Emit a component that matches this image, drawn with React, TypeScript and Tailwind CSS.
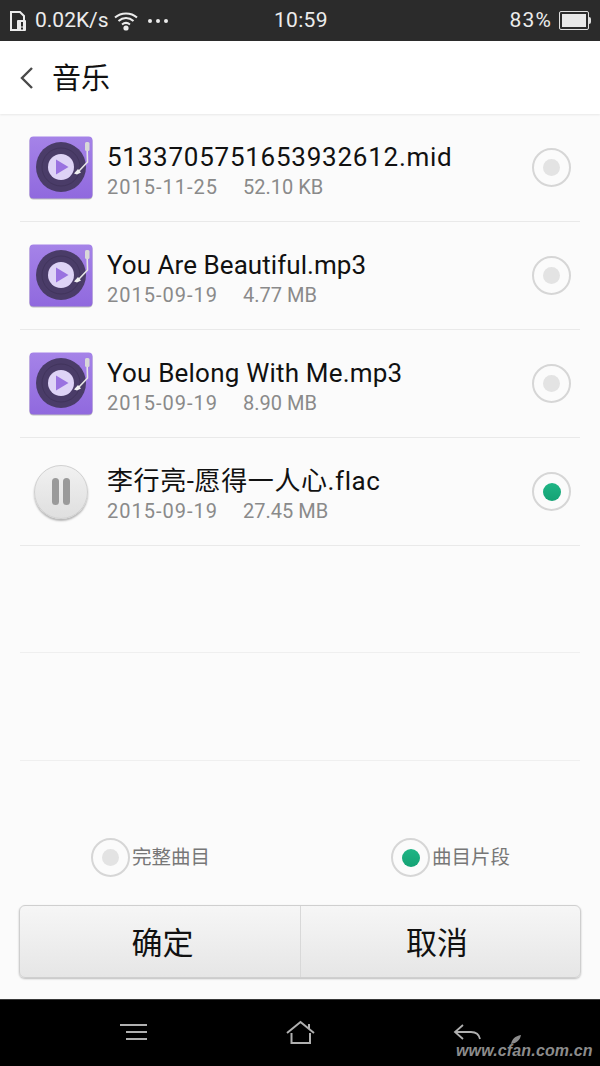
import React from 'react';

const FONT = "font-['Roboto','Noto_Sans_CJK_SC',sans-serif]";

const DiscIcon = () => (
  <svg width="64" height="64" viewBox="0 0 64 64">
    <defs>
      <linearGradient id="disc-bg" x1="0" y1="0" x2="0" y2="1">
        <stop offset="0" stopColor="#a583e8" />
        <stop offset="1" stopColor="#9069de" />
      </linearGradient>
    </defs>
    <rect x="0.5" y="1.5" width="63" height="62" rx="4" fill="#8a8a8a" opacity="0.55" />
    <rect x="0.5" y="0.5" width="63" height="62" rx="4" fill="url(#disc-bg)" />
    <circle cx="32" cy="31" r="25" fill="#4a3c68" />
    <circle cx="32" cy="31" r="19" fill="none" stroke="#41345c" strokeWidth="1" />
    <circle cx="32" cy="31" r="13" fill="#ded3f6" />
    <path d="M27 23.5 L39.5 31 L27 38.5 Z" fill="#9a72e0" />
    <path d="M58 7 L58.5 26 L50 35" fill="none" stroke="#e6e6e6" strokeWidth="1.6" />
    <rect x="56" y="6" width="4.5" height="9" rx="1.5" fill="#d8d8d8" />
    <path d="M49 33 L52 36.5 L48 38.5 L45 37.5 Z" fill="#f0f0f0" />
  </svg>
);

const Radio = ({ on }: { on: boolean }) => (
  <div className="flex h-[39px] w-[39px] shrink-0 items-center justify-center rounded-full border-2 border-[#d6d6d6] bg-[#fbfbfb]">
    {on ? (
      <div className="h-[18px] w-[18px] rounded-full bg-gradient-to-b from-[#1fb585] to-[#14a274]" />
    ) : (
      <div className="h-[17px] w-[17px] rounded-full bg-[#e3e3e3]" />
    )}
  </div>
);

const PauseButton = () => (
  <div className="ml-[5px] flex h-[54px] w-[54px] items-center justify-center gap-[4px] rounded-full border border-[#d0d0d0] bg-gradient-to-b from-[#f1f1f1] to-[#dfdfdf] shadow-[0_2px_2px_rgba(0,0,0,0.28)]">
    <div className="h-[27px] w-[7px] rounded-full bg-[#9a9a9a]" />
    <div className="h-[27px] w-[7px] rounded-full bg-[#9a9a9a]" />
  </div>
);

const songs = [
  { name: '5133705751653932612.mid', date: '2015-11-25', size: '52.10 KB', playing: false, track: 'tracking-[0.75px]' },
  { name: 'You Are Beautiful.mp3', date: '2015-09-19', size: '4.77 MB', playing: false, track: 'tracking-[0.05px]' },
  { name: 'You Belong With Me.mp3', date: '2015-09-19', size: '8.90 MB', playing: false, track: 'tracking-[0.2px]' },
  { name: '李行亮-愿得一人心.flac', date: '2015-09-19', size: '27.45 MB', playing: true, track: 'tracking-[0.6px]' },
];

export default function App() {
  return (
    <div className={`flex h-[1066px] w-[600px] flex-col overflow-hidden bg-[#fbfbfb] ${FONT}`}>
      {/* status bar */}
      <div className="relative flex h-[41px] shrink-0 items-center bg-[#2b2b2b] pl-[10px] pr-[9px] text-[21px] text-[#ececec]">
        <svg width="17" height="20" viewBox="0 0 17 20" className="mr-[8px]">
          <path d="M1 1h9l4 4v5h-3v9H1z" fill="none" stroke="#ececec" strokeWidth="2" />
          <rect x="7" y="9" width="9" height="11" rx="1" fill="#ececec" />
          <rect x="11" y="11" width="2" height="4.5" fill="#2b2b2b" />
          <rect x="11" y="16.5" width="2" height="2" fill="#2b2b2b" />
        </svg>
        <span>0.02K/s</span>
        <svg width="24" height="20" viewBox="0 0 24 20" className="ml-[5px]">
          <path d="M1 6.5C7 1 17 1 23 6.5" fill="none" stroke="#ececec" strokeWidth="2" />
          <path d="M4.5 10C9 6 15 6 19.5 10" fill="none" stroke="#ececec" strokeWidth="2" />
          <path d="M8 13.5C10.5 11.5 13.5 11.5 16 13.5" fill="none" stroke="#ececec" strokeWidth="2" />
          <circle cx="12" cy="17" r="2.6" fill="#ececec" />
        </svg>
        <div className="ml-[10px] flex gap-[4px]">
          <div className="h-[4px] w-[4px] rounded-full bg-[#ececec]" />
          <div className="h-[4px] w-[4px] rounded-full bg-[#ececec]" />
          <div className="h-[4px] w-[4px] rounded-full bg-[#ececec]" />
        </div>
        <span className="absolute left-[274px] tracking-[0.3px]">10:59</span>
        <span className="ml-auto tracking-[1.2px]">83%</span>
        <div className="ml-[7px] flex items-center">
          <div className="flex h-[19px] w-[30px] items-center rounded-[2px] border border-[#e0e0e0] p-[2px]">
            <div className="h-full w-[24px] bg-[#e8e8e8]" />
          </div>
          <div className="h-[7px] w-[2px] rounded-r-sm bg-[#e0e0e0]" />
        </div>
      </div>

      {/* header */}
      <div className="flex h-[73px] shrink-0 items-center bg-white pl-[19px] shadow-[0_1px_2px_rgba(0,0,0,0.08)]">
        <svg width="15" height="24" viewBox="0 0 15 24">
          <path d="M13 2 L3 12 L13 22" fill="none" stroke="#4a4a4a" strokeWidth="2.4" />
        </svg>
        <span className="ml-[18px] pt-[5px] text-[29px] text-[#111]">音乐</span>
      </div>

      {/* file list */}
      <div className="px-[20px]">
        {songs.map((s) => (
          <div key={s.name} className="flex h-[108px] items-center border-b border-[#e9e9e9]">
            <div className="flex w-[87px] shrink-0 items-center pl-[9px]">
              {s.playing ? <PauseButton /> : <DiscIcon />}
            </div>
            <div className="min-w-0 flex-1 pt-[3px]">
              <div className={`text-[26px] leading-[36px] text-[#111] ${s.track}`}>{s.name}</div>
              <div className="flex text-[20px] leading-[24px] text-[#8a8a8a]">
                <span className="w-[136px] tracking-[1px]">{s.date}</span>
                <span>{s.size}</span>
              </div>
            </div>
            <div className="mr-[9px]">
              <Radio on={s.playing} />
            </div>
          </div>
        ))}
        <div className="h-[107px] border-b border-[#efefef]" />
        <div className="h-[108px] border-b border-[#efefef]" />
      </div>

      {/* mode choice */}
      <div className="mt-[77px] flex h-[39px] shrink-0 pl-[91px]">
        <div className="flex w-[300px] items-center">
          <Radio on={false} />
          <span className="ml-[2px] text-[19.5px] text-[#777]">完整曲目</span>
        </div>
        <div className="flex items-center">
          <Radio on />
          <span className="ml-[2px] text-[19.5px] text-[#777]">曲目片段</span>
        </div>
      </div>

      {/* buttons */}
      <div className="ml-[19px] mt-[28px] flex h-[73px] w-[562px] shrink-0 rounded-[6px] border border-[#cfcfcf] bg-gradient-to-b from-[#f6f6f6] to-[#e6e6e6] shadow-[0_1px_2px_rgba(0,0,0,0.25)]">
        <div className="flex w-[281px] items-center justify-center border-r border-[#d8d8d8] pl-[5px] pt-[6px] text-[31px] text-[#111]">确定</div>
        <div className="flex flex-1 items-center justify-center pr-[7px] pt-[6px] text-[31px] text-[#111]">取消</div>
      </div>

      {/* nav bar */}
      <div className="relative mt-[21px] flex h-[67px] shrink-0 items-start border-t border-[#3a3a3a] bg-black">
        <svg width="28" height="20" viewBox="0 0 28 20" className="absolute left-[120px] top-[24px]">
          <path d="M0 1H27M6 8H27M6 15H27" stroke="#b0b0b0" strokeWidth="2" fill="none" />
        </svg>
        <svg width="30" height="26" viewBox="0 0 30 26" className="absolute left-[285px] top-[20px]">
          <path d="M2 13 L15.5 2 L29 13 M6.5 13 V23 H25 V13 M24 4 V9" stroke="#b0b0b0" strokeWidth="2" fill="none" />
        </svg>
        <svg width="30" height="20" viewBox="0 0 30 20" className="absolute left-[453px] top-[24px]">
          <path d="M10 1 L2 8 L10 15 M2 8 H18 C23 8 26 10 27 15" stroke="#b0b0b0" strokeWidth="1.8" fill="none" />
        </svg>
        <svg width="10" height="9" viewBox="0 0 10 9" className="absolute left-[511px] top-[35px]">
          <path d="M0 9C1 4 4 1 10 0C9 5 6 8 0 9Z" fill="#8c8c8c" />
        </svg>
        <span className="absolute left-[456px] top-[41px] font-['Liberation_Sans',sans-serif] text-[16px] font-bold italic leading-[20px] tracking-[0.15px] text-[#8c8c8c]">www.cfan.com.cn</span>
      </div>
    </div>
  );
}
